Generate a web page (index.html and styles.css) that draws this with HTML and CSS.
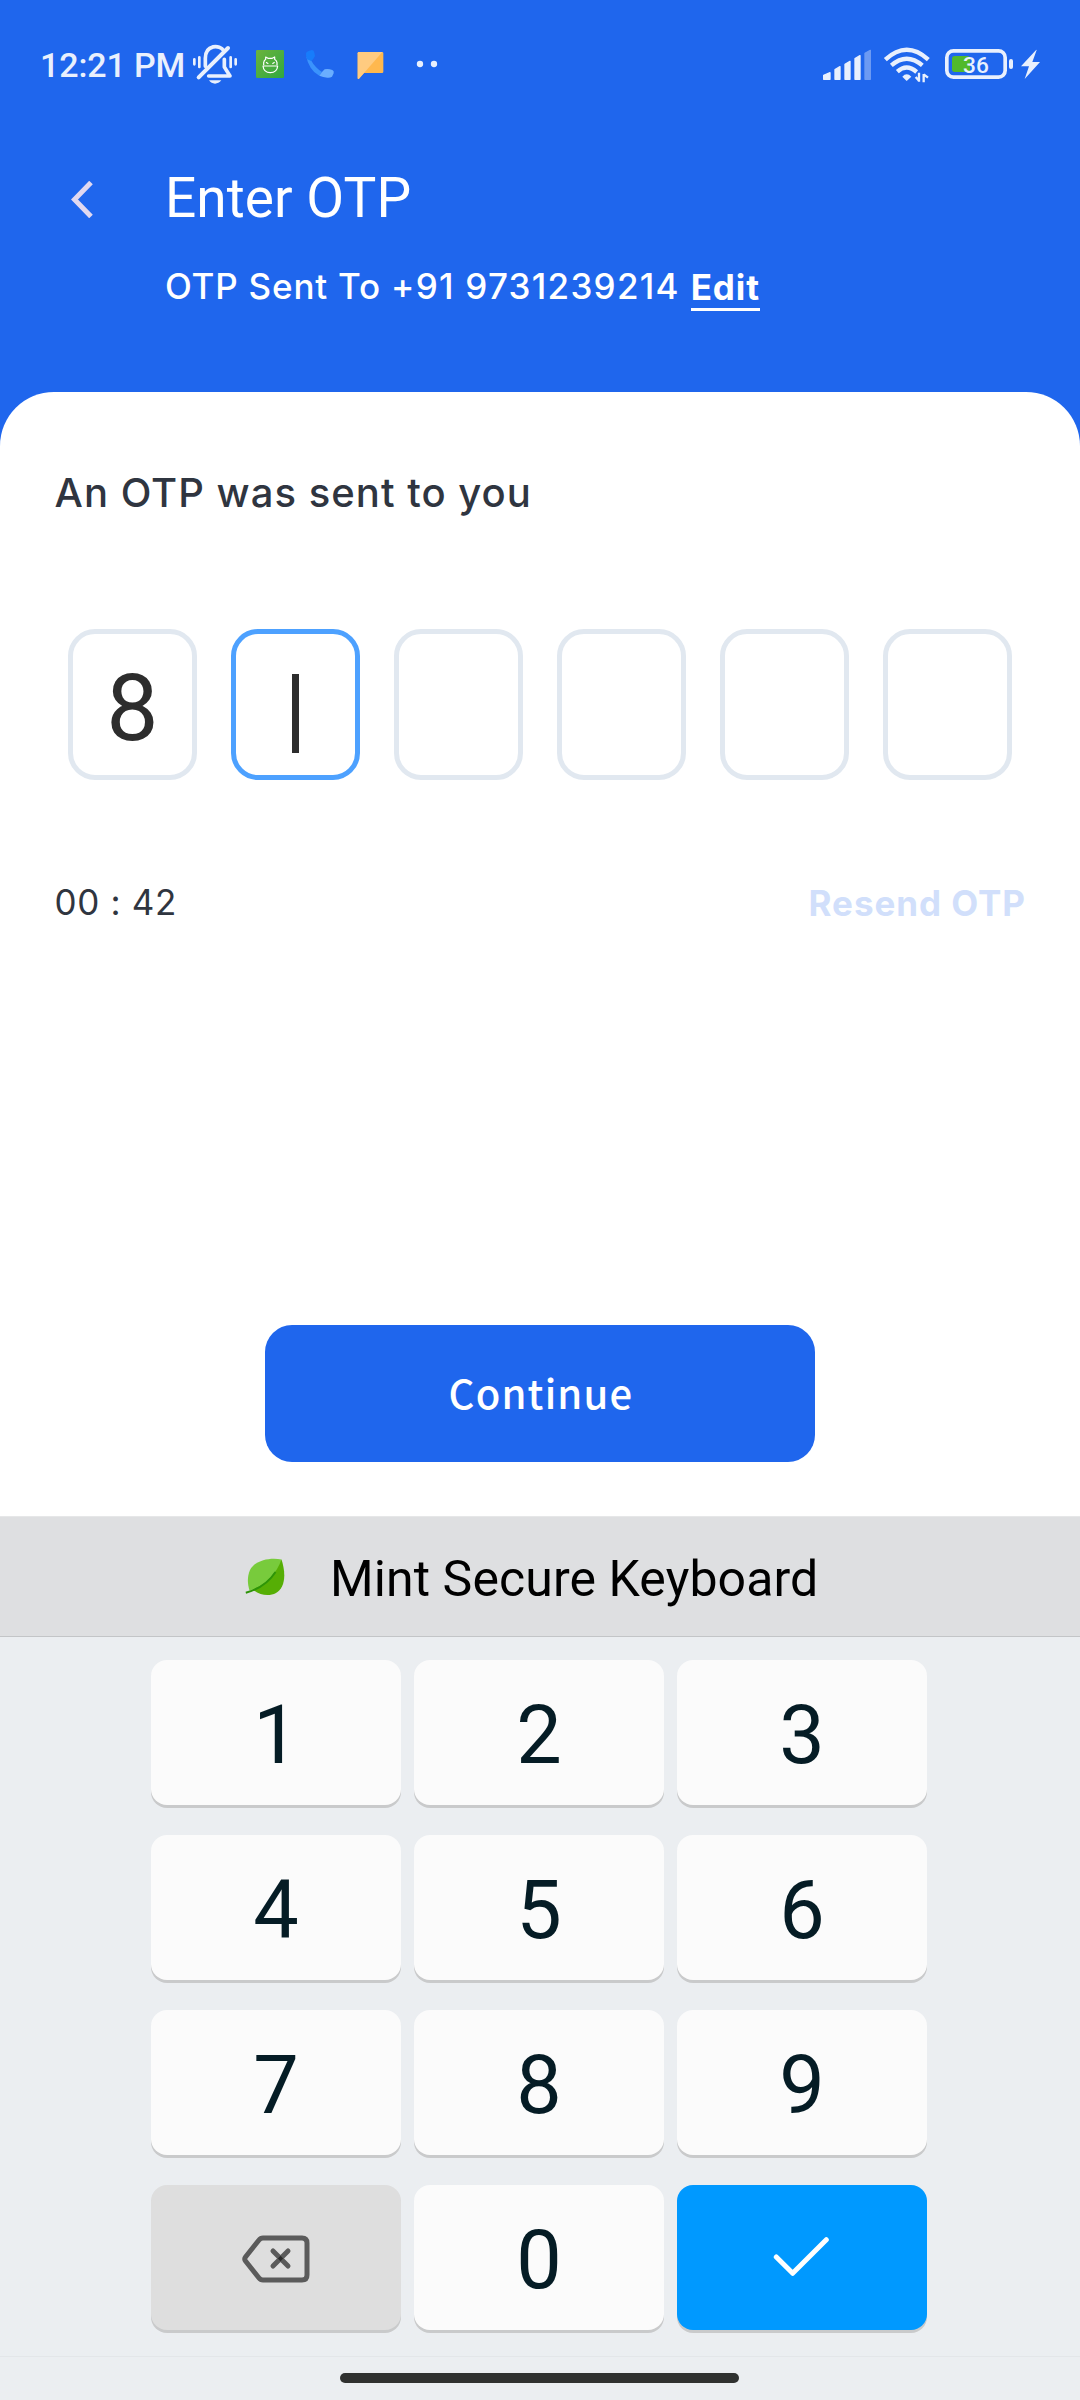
FILE: index.html
```
<!DOCTYPE html>
<html lang="en">
<head>
<meta charset="utf-8">
<title>Enter OTP</title>
<link rel="stylesheet" href="styles.css">
</head>
<body>
<div class="screen">
  <div class="status">
    <span class="time">12:21 PM</span>
    <svg class="ic bell" viewBox="516 36 138 132" fill="none" stroke="#e9f0fd" stroke-width="11" stroke-linecap="round" stroke-linejoin="round">
      <path d="M556 109V85C556 43 600 43 611 62"/>
      <path d="M566 138H630L613 111V88"/>
      <path d="M536 142L624 54" stroke-width="12"/>
      <path d="M523 88V103M538 82V111M632 82V111M647 88V103" stroke-width="8"/>
      <path d="M567 151H604Q596 161 585 161T567 151Z" fill="#e9f0fd" stroke="none"/>
    </svg>
    <svg class="ic app" viewBox="708 36 84 132">
      <defs><linearGradient id="g" x1="0" y1="0" x2="1" y2="1"><stop offset="0" stop-color="#6cb33d"/><stop offset="1" stop-color="#2fa83f"/></linearGradient></defs>
      <rect x="708" y="60" width="84" height="84" rx="4" fill="url(#g)"/>
      <g fill="none" stroke="#fff" stroke-width="3.600" stroke-linejoin="round">
        <path d="M731 106V98Q732 91 737 88V81L744 85H757L764 81V88Q770 92 771 98V106"/>
        <path d="M729 108H773Q771 128 751 128T729 108Z"/>
        <path d="M738 97L745 101M764 97L757 101"/>
      </g>
    </svg>
    <svg class="ic phone" viewBox="858 36 84 132">
      <path d="M874 92Q885 112 906 126L898 137Q882 129 872 113Q862 97 859 80Z" fill="#3b93fc"/>
      <path d="M868 62L876 60Q882 60 883 68L885 78Q881 87 874 93L861 88Q857 78 858 69Q860 64 868 62Z" fill="#177cfb"/>
      <path d="M906 126L914 118Q924 115 937 120Q943 123 941 130L936 140Q930 144 922 143Q909 142 898 137Z" fill="#6aaeff"/>
    </svg>
    <svg class="ic msg" viewBox="1011 36 81 132">
      <path d="M1017 66H1086Q1090 66 1090 70V125Q1090 129 1086 129H1032L1017 146Q1013 148 1013 144V70Q1013 66 1017 66Z" fill="#ffb84e"/>
      <path d="M1017 66H1087L1032 129L1017 146Q1013 148 1013 144V70Q1013 66 1017 66Z" fill="#ffcb80"/>
    </svg>
    <svg class="ic dots" viewBox="1188 36 66 132" fill="#e9f0fd"><circle cx="1200" cy="102" r="9.500"/><circle cx="1242" cy="102" r="9.500"/></svg>
    <svg class="ic signal" viewBox="69 36 144 132" fill="#e9f0fd" stroke="#e9f0fd" stroke-width="4" stroke-linejoin="round">
      <path d="M71 136L90 128V148H71ZM105 119L120 110V148H105ZM135 103L150 94V148H135ZM165 86L180 77V148H165Z"/>
      <path d="M195 70L211 61V148H195Z" opacity=".38"/>
    </svg>
    <svg class="ic wifi" viewBox="252 36 138 132" fill="none" stroke="#e9f0fd" stroke-width="13">
      <path d="M256 89Q320 30 385 89"/>
      <path d="M274 106Q320 66 367 106"/>
      <path d="M292 125Q320 100 350 126"/>
      <path d="M307 140Q320 126 334 140L320 153Z" fill="#e9f0fd" stroke="none"/>
      <path d="M357 128V155M347 141L357 152M371 157V132M371 133L384 143" stroke-width="7"/>
    </svg>
    <svg class="ic battery" viewBox="435 36 204 132">
      <rect x="440.500" y="62.500" width="175" height="79" rx="20" fill="none" stroke="#e9f0fd" stroke-width="11"/>
      <rect x="456" y="78" width="54" height="48" rx="8" fill="#51b92b"/>
      <path d="M627 93Q627 87 633 87T639 93V111Q639 117 633 117T627 111Z" fill="#e9f0fd"/>
      <text class="level" x="489" y="129">36</text>
    </svg>
    <svg class="ic bolt" viewBox="663 36 57 132"><path d="M709 59L663 109H687L674 147L720 96H697L710 60Z" fill="#e9f0fd"/></svg>
  </div>

  <div class="header">
    <svg class="back" viewBox="0 0 22 37" fill="none" stroke="#e0d8f0" stroke-width="5"><path d="M20 1.500L3.500 18.500L20 35.500"/></svg>
    <div>
      <div class="title">Enter OTP</div>
      <div class="sub"><span>OTP Sent To <span class="number">+91 9731239214</span></span><a class="edit">Edit</a></div>
    </div>
  </div>

  <div class="sheet">
    <div class="lead">An OTP was sent to you</div>
    <div class="boxes">
      <div class="box">8</div>
      <div class="box active"><i class="caret"></i></div>
      <div class="box"></div>
      <div class="box"></div>
      <div class="box"></div>
      <div class="box"></div>
    </div>
    <div class="meta"><span class="timer">00 : 42</span><span class="resend">Resend OTP</span></div>
    <div class="continue">Continue</div>
  </div>

  <div class="kbhead">
    <svg class="leaf" viewBox="0 0 40 38">
      <path d="M36.500 1.500C39 9 41 20 37 28.500C32 39 17 40 7 31Z" fill="#56ae05"/>
      <path d="M36.500 1.500C26 -1 10 2 5 12C2 19 2.500 26 4.500 32.500C19 28 31 17 36.500 1.500Z" fill="#78cb3c"/>
      <path d="M.8 34.700C13 31.500 24 24 30.500 14" fill="none" stroke="#2d9408" stroke-width="2"/>
    </svg>
    <span>Mint Secure Keyboard</span>
  </div>
  <div class="keyboard">
    <div class="key">1</div><div class="key">2</div><div class="key">3</div>
    <div class="key">4</div><div class="key">5</div><div class="key">6</div>
    <div class="key">7</div><div class="key">8</div><div class="key">9</div>
    <div class="key del">
      <svg width="68" height="48" viewBox="0 0 68 48" fill="none" stroke="#5b5b5b" stroke-width="5" stroke-linecap="round" stroke-linejoin="round">
        <path d="M21 3H60Q65 3 65 8V40Q65 45 60 45H21Q18.500 45 17 43L3.500 26Q2 24 3.500 22L17 5Q18.500 3 21 3Z"/>
        <path d="M31 16L46 31M46 16L31 31"/>
        <path d="M38.500 20.800L41.200 23.500L38.500 26.200L35.800 23.500Z" fill="#2a2a2a" stroke="none"/>
      </svg>
    </div>
    <div class="key">0</div>
    <div class="key ok">
      <svg width="56" height="40" viewBox="0 0 56 40" fill="none" stroke="#fff" stroke-width="5" stroke-linecap="round" stroke-linejoin="round"><path d="M3.300 20L19.700 36.300L53.300 2.700"/></svg>
    </div>
  </div>
  <div class="nav"><div class="pill"></div></div>
</div>
</body>
</html>
```
FILE: styles.css
```
* { box-sizing: border-box; }
body { margin: 0; }
svg { display: block; flex: none; }
.screen { width: 1080px; height: 2400px; background: #1f66ed; display: flex; flex-direction: column; overflow: hidden; }

/* status bar */
.status { height: 128px; padding: 0 40px; display: flex; align-items: center; flex: none; }
.time { width: 146px; padding-top: 2px; font: 500 34px/40px Roboto, sans-serif; letter-spacing: -.13px; color: #e9f0fd; white-space: nowrap; }
.ic { height: 44px; overflow: visible; }
.bell { width: 46px; margin-left: 6px; }
.app { width: 28px; margin-left: 18px; }
.phone { width: 28px; margin-left: 22px; }
.msg { width: 27px; margin-left: 23px; }
.dots { width: 22px; margin-left: 32px; }
.signal { width: 48px; margin-left: auto; }
.wifi { width: 46px; margin-left: 13px; }
.battery { width: 68px; margin-left: 15px; }
.bolt { width: 19px; margin-left: 8px; }
.level { font: 500 68px Roboto, sans-serif; fill: #e9f0fd; }

/* blue header */
.header { height: 264px; padding: 38px 0 0 71px; display: flex; gap: 72px; flex: none; color: #fff; }
.back { width: 22px; height: 37px; margin-top: 15px; }
.title { font: 400 55px/64px Roboto, sans-serif; letter-spacing: .05px; }
.sub { display: flex; margin-top: 35px; font: 500 35px/42px Inter, sans-serif; letter-spacing: .8px; white-space: nowrap; }
.number { letter-spacing: 1.250px; }
.edit { margin: 1px 0 0 11px; font-weight: 700; letter-spacing: .9px; border-bottom: 3px solid #fff; }

/* white sheet */
.sheet { height: 1124px; padding-top: 76px; border-radius: 54px 54px 0 0; background: #fff; flex: none; }
.lead { padding-left: 54.500px; font: 500 40px/49px Inter, sans-serif; letter-spacing: 1.020px; color: #2f3540; }
.boxes { margin-top: 112px; padding: 0 68px; display: flex; justify-content: space-between; }
.box { width: 129px; height: 151px; padding-top: 20px; border: 5.500px solid #e1e8f0; border-radius: 27px; font: 400 93px/109px Roboto, sans-serif; color: #2d2d2d; text-align: center; }
.active { border-color: #4da1ff; display: flex; justify-content: center; }
.caret { width: 7px; height: 79px; margin-top: 20px; background: #2d2d2d; }
.meta { margin-top: 101px; padding: 0 54px 0 54.500px; display: flex; justify-content: space-between; font: 400 35px/42px Inter, sans-serif; color: #2f3540; }
.timer { letter-spacing: .65px; }
.resend { padding-top: 1px; margin-bottom: -1px; font-weight: 700; letter-spacing: .95px; color: #d1dffb; }
.continue { width: 550px; height: 137px; margin: 402px auto 0; padding: 0 0 3px 2px; border-radius: 27px; background: #1f66ed; color: #fff; display: flex; align-items: center; justify-content: center; font: 500 40px/58px "Noto Sans CJK JP", sans-serif; letter-spacing: 1.200px; }

/* keyboard */
.kbhead { height: 121px; padding: 33px 0 0 245px; display: flex; flex: none; background: #dedfe1; border-top: 1px solid #e6e7e8; border-bottom: 1px solid #c3c5c7; font: 400 50px/58px Roboto, sans-serif; letter-spacing: .086px; color: #000; }
.leaf { width: 40px; height: 38px; margin: 8px 45px 0 0; }
.keyboard { height: 719px; padding-top: 23px; flex: none; background: #ebeef1; display: grid; grid-template-columns: repeat(3, 250px); grid-auto-rows: 145px; gap: 30px 13px; padding-left: 151px; align-content: start; }
.key { padding-top: 6px; border-radius: 16px; background: #fbfbfb; box-shadow: 0 3px 0 #c9cacb; display: flex; align-items: center; justify-content: center; font: 400 81px/95px Roboto, sans-serif; color: #051c25; }
.del { background: #dedede; padding-top: 2px; }
.ok { background: #0099ff; padding: 0 2px 1px 0; }
.nav { height: 44px; padding: 16px 1px 0 0; flex: none; background: #ebeef1; border-top: 1px solid #e3e6e9; }
.pill { width: 399px; height: 10px; margin: 0 auto; border-radius: 5px; background: #2f3130; }
```
